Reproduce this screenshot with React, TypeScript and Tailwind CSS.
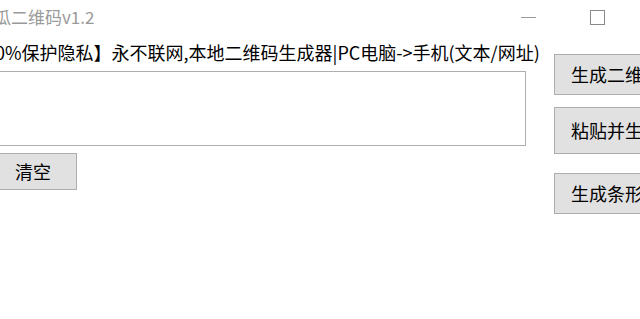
const buttonBase =
  "border border-[#adadad] bg-[#e1e1e1] text-left text-[18px] text-black";

export default function App() {
  return (
    <div className="w-[640px] h-[319px] overflow-hidden bg-white font-['Noto_Sans_CJK_SC',sans-serif]">
      {/* 标题栏 */}
      <div className="flex h-[34px] items-center">
        <div className="flex-1 -ml-[6px] whitespace-nowrap text-[17px] text-[#9a9a9a]">
          瓜二维码v1.2
        </div>
        <span className="block h-px w-[15px] bg-[#9a9a9a]" />
        <span className="ml-[54px] mr-[35px] block h-[15px] w-[15px] border border-[#8a8a8a]" />
      </div>

      <div className="flex">
        {/* 左侧 */}
        <div className="-ml-[10px] w-[536px] shrink-0 pt-[5px]">
          <div className="-ml-[33px] h-[26px] whitespace-nowrap text-[18px] leading-[26px] text-black">
            【100%保护隐私】永不联网,本地二维码生成器|PC电脑-&gt;手机(文本/网址)
          </div>
          <textarea className="mt-[6px] block h-[75px] w-full resize-none border border-[#adadad] bg-white outline-none" />
          <button className={`${buttonBase} mt-[7px] block h-[37px] w-[87px] pl-[24px]`}>
            清空
          </button>
        </div>

        {/* 右侧按钮 */}
        <div className="ml-[28px] mt-[20px] flex w-[150px] shrink-0 flex-col">
          <button className={`${buttonBase} h-[41px] w-full pl-[16px]`}>生成二维码</button>
          <button className={`${buttonBase} mt-[12px] h-[47px] w-full pl-[16px]`}>粘贴并生成</button>
          <button className={`${buttonBase} mt-[19px] h-[41px] w-full pl-[16px]`}>生成条形码</button>
        </div>
      </div>
    </div>
  );
}
